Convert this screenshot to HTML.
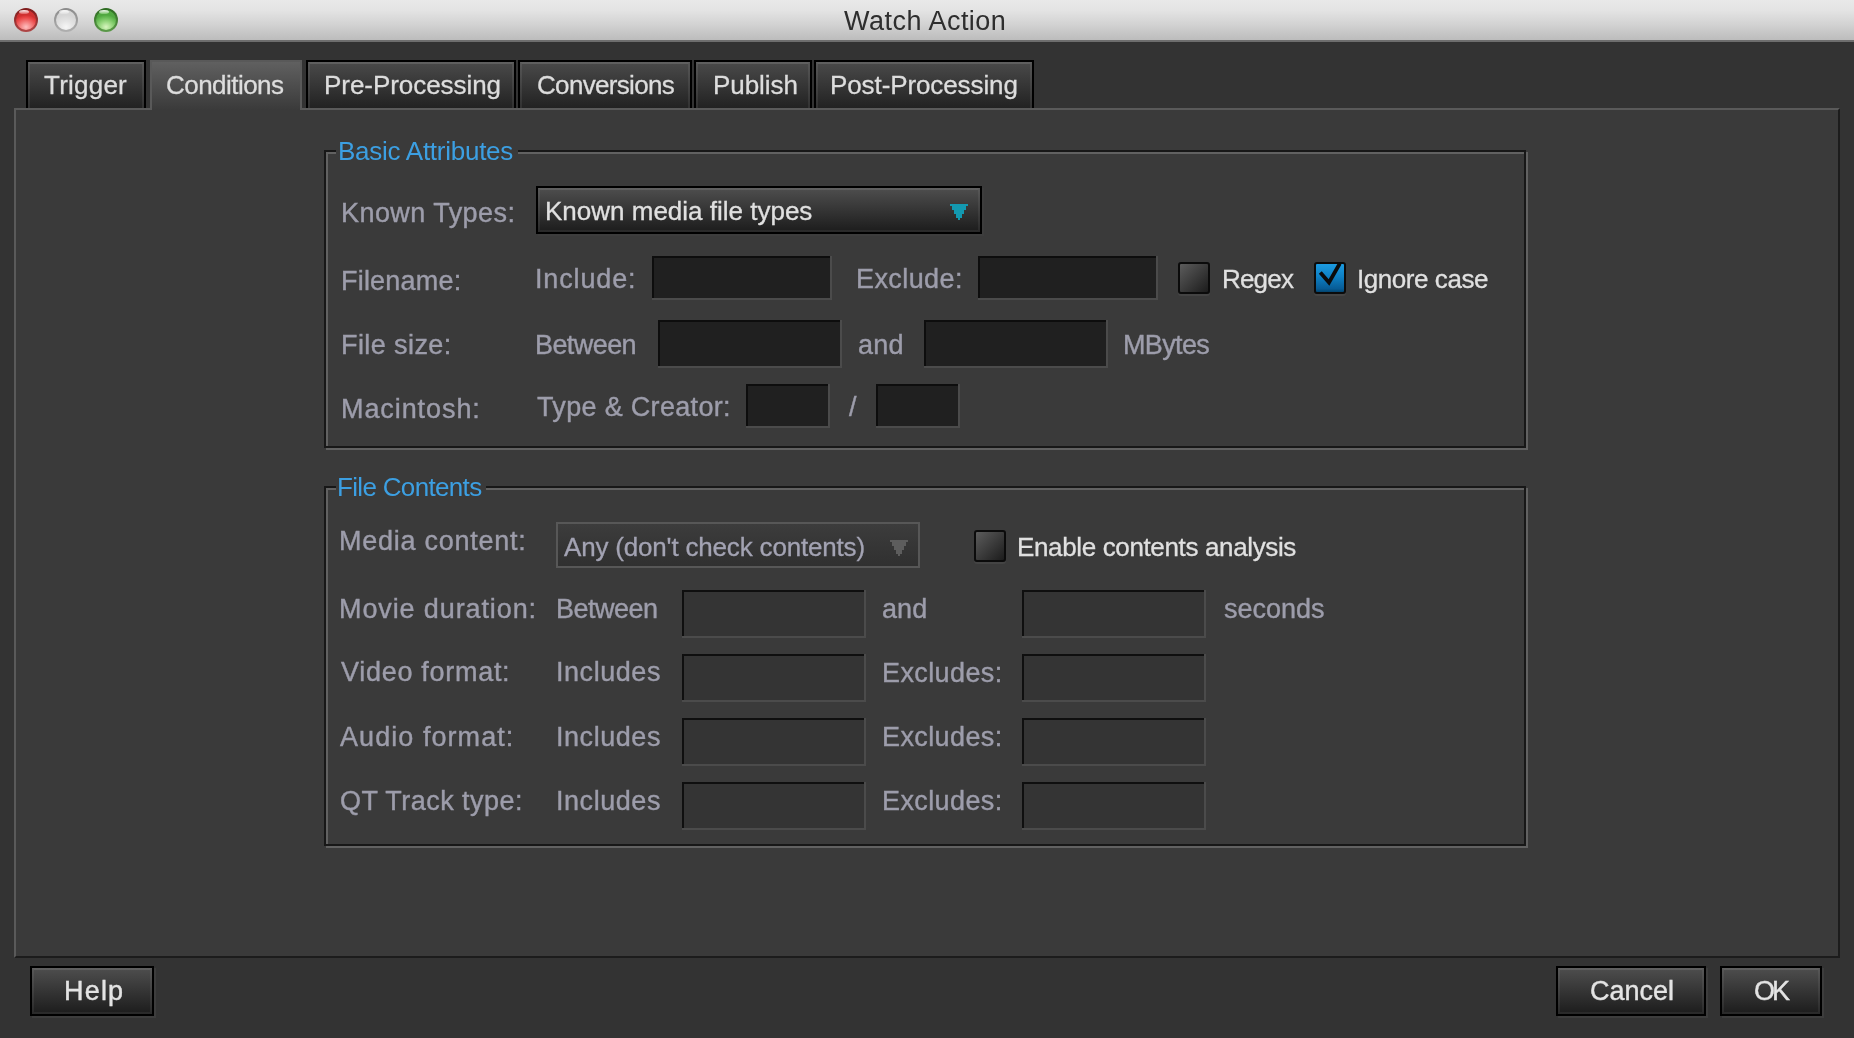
<!DOCTYPE html>
<html><head><meta charset="utf-8">
<style>
html,body{margin:0;padding:0;}
body{width:1854px;height:1038px;position:relative;overflow:hidden;background:#333333;font-family:"Liberation Sans",sans-serif;}
div{position:absolute;box-sizing:border-box;}
.t{font-size:26px;line-height:32px;white-space:pre;will-change:transform;-webkit-text-stroke:0.4px currentColor;}
.tab{color:#dddddd;-webkit-text-stroke:0.3px currentColor !important;}
.light{color:#e0e0e0;-webkit-text-stroke:0.3px currentColor !important;}
.lbl{color:#9d9dab;}
.dis{color:#a3a3b3;-webkit-text-stroke:0.3px currentColor !important;}
.blue{color:#3c9fe2;-webkit-text-stroke:0 !important;}
.btn{color:#e4e4e4;}
.title{color:#2e2e2e;-webkit-text-stroke:0 !important;}
#titlebar{left:0;top:0;width:1854px;height:40px;background:linear-gradient(#e9e9e9 0,#e4e4e4 25%,#d3d3d3 60%,#bcbcbc 100%);}
#titleline{left:0;top:40px;width:1854px;height:2px;background:#6e6e6e;}
.light3{width:24px;height:24px;top:8px;border-radius:50%;}
.light3 .in{left:2px;top:2px;width:20px;height:20px;border-radius:50%;}
.light3 .hl{left:5px;top:2px;width:10px;height:4px;border-radius:50%;}
#red{left:14px;background:linear-gradient(#7e1a1a,#b04848);}
#red .in{background:radial-gradient(ellipse 70% 60% at 50% 85%,#fdc0c0 0,#f47a7a 45%,#e84444 80%,#d03030 100%);}
#red .hl{background:linear-gradient(rgba(255,255,255,0.95),rgba(255,200,200,0.3));}
#gray{left:54px;background:linear-gradient(#8a8a8a,#b0b0b0);}
#gray .in{background:radial-gradient(ellipse 70% 60% at 50% 85%,#f6f6f6 0,#e4e4e4 50%,#d6d6d6 100%);}
#gray .hl{background:linear-gradient(rgba(255,255,255,0.95),rgba(255,255,255,0.2));}
#green{left:94px;background:linear-gradient(#2c6a20,#5c9a4a);}
#green .in{background:radial-gradient(ellipse 70% 60% at 50% 85%,#d8f5c0 0,#98d880 45%,#68bc55 80%,#50a840 100%);}
#green .hl{background:linear-gradient(rgba(255,255,255,0.95),rgba(220,255,200,0.3));}

#panel{left:14px;top:108px;width:1826px;height:850px;background:#3a3a3a;border-top:2px solid #5a5a5a;border-left:2px solid #5a5a5a;border-right:2px solid #1c1c1c;border-bottom:2px solid #1c1c1c;}

.tabi{top:60px;height:48px;border:2px solid #000;border-bottom:none;background:linear-gradient(#4a4a4a,#222222);}
.tabi::before{content:"";position:absolute;left:0;top:0;right:0;bottom:0;border:2px solid rgba(255,255,255,0.07);border-bottom:none;border-top-color:rgba(255,255,255,0.12);}
.tabsel{top:60px;height:50px;border:2px solid #595959;border-bottom:none;background:linear-gradient(#606060,#3a3a3a);}

.etch{border:2px solid #171717;}
.etch2{border:2px solid #616161;}
.gap{background:#3a3a3a;}

.tf,.tfd{background:#4b4b4b;}
.tf::before,.tfd::before{content:"";position:absolute;left:0;top:0;right:2px;bottom:2px;background:#0d0d0d;}
.tf::after,.tfd::after{content:"";position:absolute;left:2px;top:2px;right:2px;bottom:2px;background:#202020;}
.tfd::after{background:#343434;}
.tfd::before{background:#0f0f0f;}


.bt{border:2px solid #000;background:linear-gradient(#4e4e4e,#1c1c1c);box-shadow:2px 2px 0 0 #3d3d3d;}
.bt::before{content:"";position:absolute;left:0;top:0;right:0;bottom:0;border:2px solid rgba(255,255,255,0.06);border-top-color:rgba(255,255,255,0.1);}

.cb{width:32px;height:32px;border-radius:3px;border:2px solid #0b0b0b;background:linear-gradient(135deg,#5c5c5c,#1c1c1c);box-shadow:0 2px 0 0 #444;}
.cbc{width:32px;height:32px;border-radius:3px;border:2px solid #0b0b0b;background:linear-gradient(#1c9be0 0%,#0e80c4 45%,#075c96 88%,#03456f 100%);box-shadow:0 2px 0 0 #444;}
</style></head><body>
<div id="titlebar"></div>
<div id="titleline"></div>
<div class="light3" id="red"><div class="in"></div><div class="hl"></div></div>
<div class="light3" id="gray"><div class="in"></div><div class="hl"></div></div>
<div class="light3" id="green"><div class="in"></div><div class="hl"></div></div>

<div id="panel"></div>

<!-- tabs -->
<div class="tabi" style="left:26px;width:120px"></div>
<div class="tabsel" style="left:150px;width:152px"></div>
<div class="tabi" style="left:306px;width:210px"></div>
<div class="tabi" style="left:518px;width:174px"></div>
<div class="tabi" style="left:694px;width:118px"></div>
<div class="tabi" style="left:814px;width:220px"></div>

<!-- fieldset 1 etched -->
<div class="etch2" style="left:326px;top:152px;width:1202px;height:298px"></div>
<div class="etch" style="left:324px;top:150px;width:1202px;height:298px"></div>
<div class="gap" style="left:336px;top:146px;width:182px;height:12px"></div>
<!-- fieldset 2 etched -->
<div class="etch2" style="left:326px;top:488px;width:1202px;height:360px"></div>
<div class="etch" style="left:324px;top:486px;width:1202px;height:360px"></div>
<div class="gap" style="left:336px;top:482px;width:150px;height:12px"></div>

<!-- combo known types -->
<div class="bt" style="left:536px;top:186px;width:446px;height:48px"></div>
<svg style="position:absolute;left:950px;top:204px" width="18" height="16"><path d="M0 0H18V2H16V6H14V10H12V14H10V16H8V14H6V10H4V6H2V2H0Z" fill="#1399b0"/></svg>

<!-- basic text fields -->
<div class="tf" style="left:652px;top:256px;width:180px;height:44px"></div>
<div class="tf" style="left:978px;top:256px;width:180px;height:44px"></div>
<div class="cb" style="left:1178px;top:262px"></div>
<div class="cbc" style="left:1314px;top:262px"></div>
<svg style="position:absolute;left:1314px;top:262px" width="32" height="32"><path d="M6.3 10.5L15 20.5L25.8 1.5" stroke="#0b0b0b" stroke-width="3.8" fill="none"/></svg>

<div class="tf" style="left:658px;top:320px;width:184px;height:48px"></div>
<div class="tf" style="left:924px;top:320px;width:184px;height:48px"></div>
<div class="tf" style="left:746px;top:384px;width:84px;height:44px"></div>
<div class="tf" style="left:876px;top:384px;width:84px;height:44px"></div>

<!-- disabled combo -->
<div style="left:556px;top:522px;width:364px;height:46px;border:2px solid #575757;background:linear-gradient(#3c3c3c,#303030)"></div>
<svg style="position:absolute;left:890px;top:540px" width="18" height="16"><path d="M0 0H18V2H16V6H14V10H12V14H10V16H8V14H6V10H4V6H2V2H0Z" fill="#5d5d5d"/></svg>
<div class="cb" style="left:974px;top:530px"></div>

<!-- disabled fields -->
<div class="tfd" style="left:682px;top:590px;width:184px;height:48px"></div>
<div class="tfd" style="left:1022px;top:590px;width:184px;height:48px"></div>
<div class="tfd" style="left:682px;top:654px;width:184px;height:48px"></div>
<div class="tfd" style="left:1022px;top:654px;width:184px;height:48px"></div>
<div class="tfd" style="left:682px;top:718px;width:184px;height:48px"></div>
<div class="tfd" style="left:1022px;top:718px;width:184px;height:48px"></div>
<div class="tfd" style="left:682px;top:782px;width:184px;height:48px"></div>
<div class="tfd" style="left:1022px;top:782px;width:184px;height:48px"></div>

<!-- buttons -->
<div class="bt" style="left:30px;top:966px;width:124px;height:50px"></div>
<div class="bt" style="left:1556px;top:966px;width:150px;height:50px"></div>
<div class="bt" style="left:1720px;top:966px;width:102px;height:50px"></div>

<div class="t tab" style="left:44.2px;top:69.0px;font-size:26px;letter-spacing:0.23px">Trigger</div>
<div class="t tab" style="left:166.0px;top:69.0px;font-size:26px;letter-spacing:-0.54px">Conditions</div>
<div class="t tab" style="left:324.0px;top:69.0px;font-size:26px;letter-spacing:-0.05px">Pre-Processing</div>
<div class="t tab" style="left:537.4px;top:69.0px;font-size:26px;letter-spacing:-0.68px">Conversions</div>
<div class="t tab" style="left:712.8px;top:69.0px;font-size:26px;letter-spacing:-0.05px">Publish</div>
<div class="t tab" style="left:830.4px;top:69.0px;font-size:26px;letter-spacing:-0.10px">Post-Processing</div>
<div class="t blue" style="left:337.5px;top:134.7px;font-size:26px;letter-spacing:-0.26px">Basic Attributes</div>
<div class="t blue" style="left:337.4px;top:470.7px;font-size:26px;letter-spacing:-0.67px">File Contents</div>
<div class="t lbl" style="left:341.3px;top:197.0px;font-size:27px;letter-spacing:0.44px">Known Types:</div>
<div class="t light" style="left:545.3px;top:194.9px;font-size:26px;letter-spacing:0.00px">Known media file types</div>
<div class="t lbl" style="left:341.3px;top:264.7px;font-size:27px;letter-spacing:0.21px">Filename:</div>
<div class="t lbl" style="left:535.4px;top:262.9px;font-size:27px;letter-spacing:0.85px">Include:</div>
<div class="t lbl" style="left:855.5px;top:262.6px;font-size:27px;letter-spacing:0.41px">Exclude:</div>
<div class="t light" style="left:1221.9px;top:263.0px;font-size:26px;letter-spacing:-0.81px">Regex</div>
<div class="t light" style="left:1357.3px;top:262.6px;font-size:26px;letter-spacing:-0.44px">Ignore case</div>
<div class="t lbl" style="left:341.3px;top:328.6px;font-size:27px;letter-spacing:0.41px">File size:</div>
<div class="t lbl" style="left:535.4px;top:328.6px;font-size:27px;letter-spacing:-0.58px">Between</div>
<div class="t lbl" style="left:858.0px;top:329.4px;font-size:27px;letter-spacing:0.28px">and</div>
<div class="t lbl" style="left:1123.4px;top:329.4px;font-size:27px;letter-spacing:-0.64px">MBytes</div>
<div class="t lbl" style="left:341.3px;top:392.7px;font-size:27px;letter-spacing:0.92px">Macintosh:</div>
<div class="t lbl" style="left:536.5px;top:391.0px;font-size:27px;letter-spacing:0.32px">Type &amp; Creator:</div>
<div class="t lbl" style="left:848.5px;top:391.0px;font-size:27px;letter-spacing:0.00px">/</div>
<div class="t lbl" style="left:339.3px;top:524.6px;font-size:27px;letter-spacing:0.74px">Media content:</div>
<div class="t dis" style="left:564.3px;top:530.9px;font-size:26px;letter-spacing:-0.18px">Any (don't check contents)</div>
<div class="t light" style="left:1017.0px;top:530.7px;font-size:26px;letter-spacing:-0.36px">Enable contents analysis</div>
<div class="t lbl" style="left:339.3px;top:592.8px;font-size:27px;letter-spacing:0.89px">Movie duration:</div>
<div class="t lbl" style="left:555.5px;top:592.8px;font-size:27px;letter-spacing:-0.49px">Between</div>
<div class="t lbl" style="left:882.2px;top:593.0px;font-size:27px;letter-spacing:0.08px">and</div>
<div class="t lbl" style="left:1223.6px;top:593.0px;font-size:27px;letter-spacing:0.01px">seconds</div>
<div class="t lbl" style="left:341.3px;top:656.4px;font-size:27px;letter-spacing:0.71px">Video format:</div>
<div class="t lbl" style="left:555.5px;top:656.4px;font-size:27px;letter-spacing:0.55px">Includes</div>
<div class="t lbl" style="left:881.6px;top:657.1px;font-size:27px;letter-spacing:0.39px">Excludes:</div>
<div class="t lbl" style="left:340.4px;top:720.5px;font-size:27px;letter-spacing:1.06px">Audio format:</div>
<div class="t lbl" style="left:555.5px;top:720.5px;font-size:27px;letter-spacing:0.55px">Includes</div>
<div class="t lbl" style="left:881.6px;top:721.1px;font-size:27px;letter-spacing:0.39px">Excludes:</div>
<div class="t lbl" style="left:340.3px;top:784.7px;font-size:27px;letter-spacing:0.45px">QT Track type:</div>
<div class="t lbl" style="left:555.5px;top:784.5px;font-size:27px;letter-spacing:0.55px">Includes</div>
<div class="t lbl" style="left:881.6px;top:785.1px;font-size:27px;letter-spacing:0.39px">Excludes:</div>
<div class="t btn" style="left:63.8px;top:975.3px;font-size:27px;letter-spacing:1.20px">Help</div>
<div class="t btn" style="left:1589.7px;top:975.2px;font-size:27px;letter-spacing:0.01px">Cancel</div>
<div class="t btn" style="left:1754.0px;top:975.2px;font-size:27px;letter-spacing:-3.00px">OK</div>
<div class="t title" style="left:843.9px;top:4.7px;font-size:27px;letter-spacing:0.48px">Watch Action</div>
</body></html>
